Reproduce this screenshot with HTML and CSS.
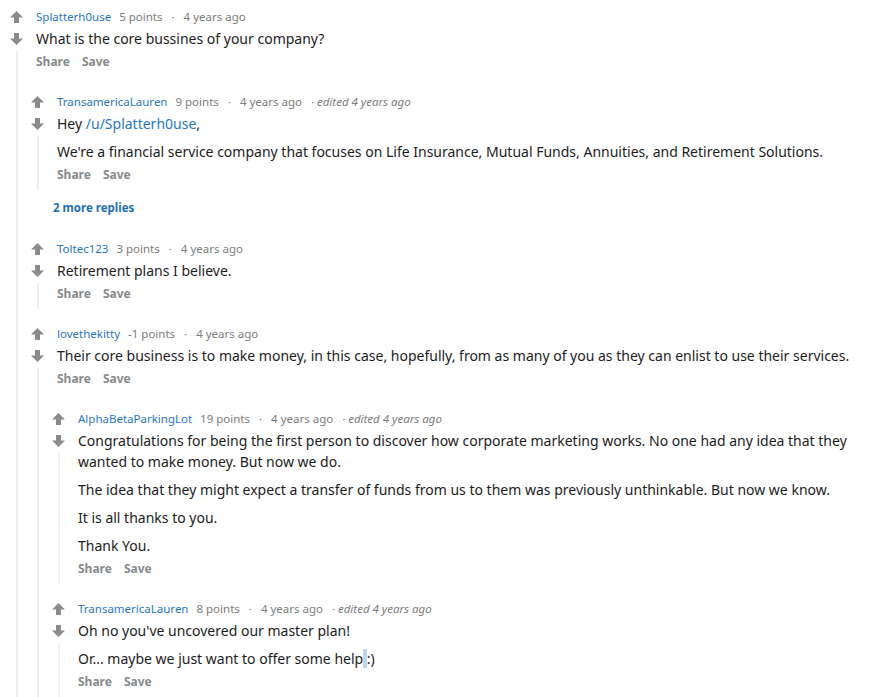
FILE: index.html
```html
<!DOCTYPE html>
<html lang="en">
<head>
<meta charset="utf-8">
<title>Comments</title>
<link rel="stylesheet" href="styles.css">
</head>
<body>
<div class="thread-list">
  <div class="comment root">
    <div class="rail">
      <span class="vote up"><svg width="13" height="12" viewBox="0 0 13 12"><path d="M6.5 0 L13 6.5 H9 V12 H4 V6.5 H0 Z"/></svg></span>
      <span class="vote down"><svg width="13" height="12" viewBox="0 0 13 12"><path d="M6.5 12 L13 5.5 H9 V0 H4 V5.5 H0 Z"/></svg></span>
      <span class="line"></span>
    </div>
    <div class="main">
      <div class="head"><span class="user">Splatterh0use</span><span>5 points</span><span class="sep">·</span><span>4 years ago</span></div>
      <div class="body"><p>What is the core bussines of your company?</p></div>
      <div class="actions"><span>Share</span><span>Save</span></div>
      <div class="children">
        <div class="comment">
          <div class="rail">
            <span class="vote up"><svg width="13" height="12" viewBox="0 0 13 12"><path d="M6.5 0 L13 6.5 H9 V12 H4 V6.5 H0 Z"/></svg></span>
            <span class="vote down"><svg width="13" height="12" viewBox="0 0 13 12"><path d="M6.5 12 L13 5.5 H9 V0 H4 V5.5 H0 Z"/></svg></span>
            <span class="line"></span>
          </div>
          <div class="main">
            <div class="head"><span class="user">TransamericaLauren</span><span>9 points</span><span class="sep">·</span><span>4 years ago</span><span class="edited">· edited 4 years ago</span></div>
            <div class="body"><p>Hey <a class="link" href="#">/u/Splatterh0use</a>,</p><p>We're a financial service company that focuses on Life Insurance, Mutual Funds, Annuities, and Retirement Solutions.</p></div>
            <div class="actions"><span>Share</span><span>Save</span></div>
          </div>
        </div>
        <div class="more">2 more replies</div>
        <div class="comment">
          <div class="rail">
            <span class="vote up"><svg width="13" height="12" viewBox="0 0 13 12"><path d="M6.5 0 L13 6.5 H9 V12 H4 V6.5 H0 Z"/></svg></span>
            <span class="vote down"><svg width="13" height="12" viewBox="0 0 13 12"><path d="M6.5 12 L13 5.5 H9 V0 H4 V5.5 H0 Z"/></svg></span>
            <span class="line"></span>
          </div>
          <div class="main">
            <div class="head"><span class="user">Toltec123</span><span>3 points</span><span class="sep">·</span><span>4 years ago</span></div>
            <div class="body"><p>Retirement plans I believe.</p></div>
            <div class="actions"><span>Share</span><span>Save</span></div>
          </div>
        </div>
        <div class="comment">
          <div class="rail">
            <span class="vote up"><svg width="13" height="12" viewBox="0 0 13 12"><path d="M6.5 0 L13 6.5 H9 V12 H4 V6.5 H0 Z"/></svg></span>
            <span class="vote down"><svg width="13" height="12" viewBox="0 0 13 12"><path d="M6.5 12 L13 5.5 H9 V0 H4 V5.5 H0 Z"/></svg></span>
            <span class="line"></span>
          </div>
          <div class="main">
            <div class="head"><span class="user">lovethekitty</span><span>-1 points</span><span class="sep">·</span><span>4 years ago</span></div>
            <div class="body"><p>Their core business is to make money, in this case, hopefully, from as many of you as they can enlist to use their services.</p></div>
            <div class="actions"><span>Share</span><span>Save</span></div>
            <div class="children">
              <div class="comment">
                <div class="rail">
                  <span class="vote up"><svg width="13" height="12" viewBox="0 0 13 12"><path d="M6.5 0 L13 6.5 H9 V12 H4 V6.5 H0 Z"/></svg></span>
                  <span class="vote down"><svg width="13" height="12" viewBox="0 0 13 12"><path d="M6.5 12 L13 5.5 H9 V0 H4 V5.5 H0 Z"/></svg></span>
                  <span class="line"></span>
                </div>
                <div class="main">
                  <div class="head"><span class="user">AlphaBetaParkingLot</span><span>19 points</span><span class="sep">·</span><span>4 years ago</span><span class="edited">· edited 4 years ago</span></div>
                  <div class="body">
                    <p>Congratulations for being the first person to discover how corporate marketing works. No one had any idea that they wanted to make money. But now we do.</p>
                    <p>The idea that they might expect a transfer of funds from us to them was previously unthinkable. But now we know.</p>
                    <p>It is all thanks to you.</p>
                    <p>Thank You.</p>
                  </div>
                  <div class="actions"><span>Share</span><span>Save</span></div>
                </div>
              </div>
              <div class="comment">
                <div class="rail">
                  <span class="vote up"><svg width="13" height="12" viewBox="0 0 13 12"><path d="M6.5 0 L13 6.5 H9 V12 H4 V6.5 H0 Z"/></svg></span>
                  <span class="vote down"><svg width="13" height="12" viewBox="0 0 13 12"><path d="M6.5 12 L13 5.5 H9 V0 H4 V5.5 H0 Z"/></svg></span>
                  <span class="line"></span>
                </div>
                <div class="main">
                  <div class="head"><span class="user">TransamericaLauren</span><span>8 points</span><span class="sep">·</span><span>4 years ago</span><span class="edited">· edited 4 years ago</span></div>
                  <div class="body">
                    <p>Oh no you've uncovered our master plan!</p>
                    <p>Or... maybe we just want to offer some help<span class="sel"> </span>:)</p>
                  </div>
                  <div class="actions"><span>Share</span><span>Save</span></div>
                </div>
              </div>
            </div>
          </div>
        </div>
      </div>
    </div>
  </div>
</div>
</body>
</html>
```
FILE: styles.css
```css
html, body {
  margin: 0;
  background: #ffffff;
}
body {
  padding: 0 10px 0 6px;
  font-family: "Noto Sans", "DejaVu Sans", sans-serif;
  overflow: hidden;
}
.comment {
  display: flex;
  padding-top: 14px;
}
.comment.root {
  padding-top: 6px;
}
.rail {
  width: 21px;
  flex: none;
  display: flex;
  flex-direction: column;
  align-items: center;
}
.vote {
  display: flex;
  align-items: center;
  justify-content: center;
  height: 22px;
}
.vote.down {
  height: 21px;
}
.vote svg {
  display: block;
  fill: #898b8d;
}
.line {
  display: block;
  width: 2px;
  flex: 1;
  margin-top: 2px;
  background: #edeff1;
}
.main {
  flex: 1;
  min-width: 0;
  padding-bottom: 7px;
}
.head, .body, .actions {
  padding-left: 9px;
}
.head {
  font-size: 11.5px;
  line-height: 22px;
  color: #7c7c7c;
  white-space: nowrap;
}
.user {
  color: #2a77bf;
  margin-right: 8px;
}
.sep {
  margin: 0 9px;
}
.edited {
  font-style: italic;
  margin-left: 9px;
}
.body {
  font-size: 14px;
  line-height: 21px;
  color: #1c1c1c;
}
.body p {
  margin: 0;
}
.body p + p {
  margin-top: 7px;
}
.link {
  color: #2a77bf;
  text-decoration: none;
}
.sel {
  background: #b9d6f2;
}
.actions {
  margin-top: 5px;
  display: flex;
  gap: 12px;
  font-size: 12px;
  line-height: 16px;
  font-weight: 700;
  color: #878a8c;
}
.children {
  margin-top: 7px;
}
.more {
  padding: 10px 0 8px 26px;
  font-size: 11.5px;
  line-height: 16px;
  font-weight: 700;
  color: #1f6fb5;
}
```
